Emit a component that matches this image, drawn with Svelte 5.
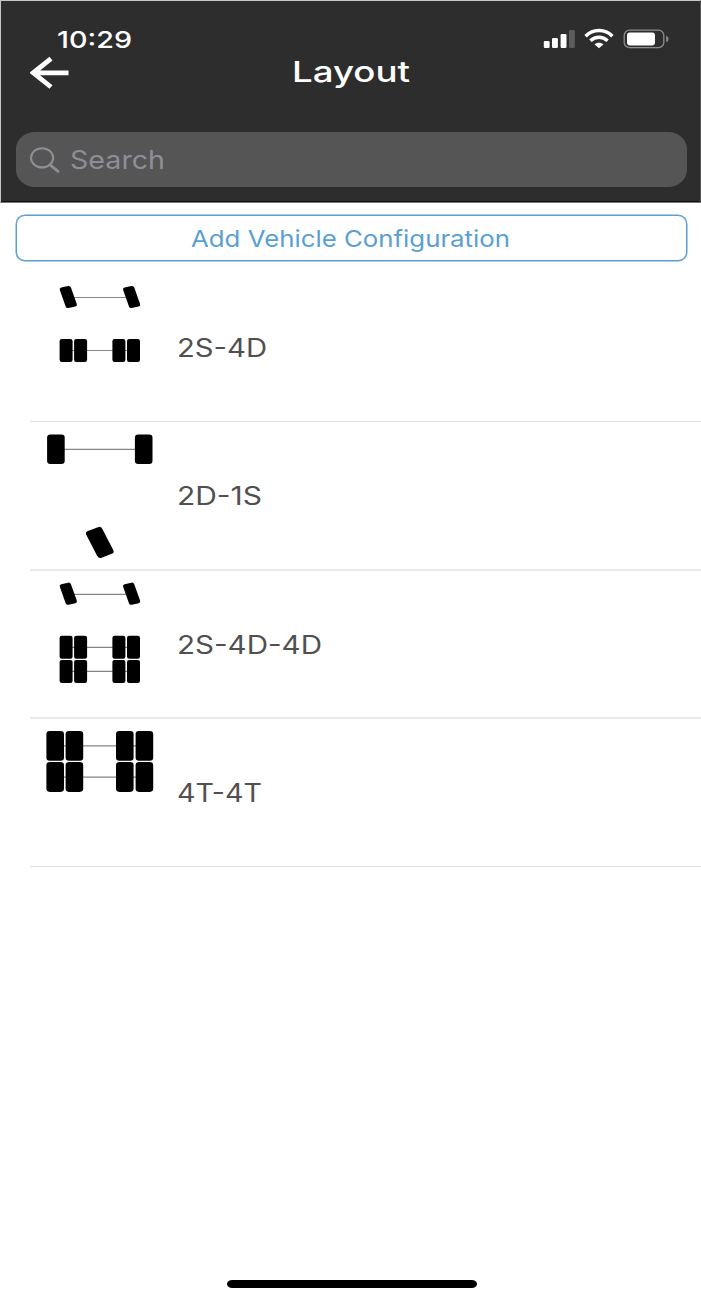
<script>
  const smallSteer = 'matrix(.975 -.22 .335 .94 ';
  const largeSteer = 'matrix(.93 -.35 .46 .89 ';

  // Wheels are [centre x, centre y]; axles are [x1, x2, y]. Units are row pixels.
  const rows = [
    {
      name: '2S-4D', length: 90, height: 149,
      steer: [[68.3, 24], [131.6, 24]], duals: [[66.1, 77.5], [80.6, 77.5], [118.9, 77.5], [133.5, 77.5]],
      w: 13, h: 23, axles: [[72, 128, 24.5], [66, 134, 77.5]]
    },
    {
      name: '2D-1S', length: 85, height: 149,
      big: [[99.8, 120.4]], duals: [[55.9, 27.3], [143.7, 27.3]],
      w: 17.6, h: 29.6, axles: [[56, 144, 27.3]]
    },
    {
      name: '2S-4D-4D', length: 145, height: 148,
      steer: [[68.3, 22.7], [131.6, 22.7]],
      duals: [[66.1, 76.2], [80.6, 76.2], [118.9, 76.2], [133.5, 76.2], [66.1, 100.4], [80.6, 100.4], [118.9, 100.4], [133.5, 100.4]],
      w: 13, h: 23, axles: [[72, 128, 23.3], [66, 134, 76.4], [66, 134, 100.4]]
    },
    {
      name: '4T-4T', length: 85, height: 148,
      duals: [[55.2, 26.8], [74.4, 26.8], [124.8, 26.8], [144.4, 26.8], [55.2, 58], [74.4, 58], [124.8, 58], [144.4, 58]],
      w: 17.6, h: 29.8, axles: [[56, 144, 26.9], [56, 144, 58.2]]
    }
  ];
</script>

{#snippet wide(text, length, size, weight)}
  <svg class="wide" width={length} height={size} aria-label={text}>
    <text x="0" y={size * 0.86} font-size={size} font-weight={weight} textLength={length} lengthAdjust="spacingAndGlyphs">{text}</text>
  </svg>
{/snippet}

<main class="screen">
  <header>
    <div class="status">
      <div class="time">{@render wide('10:29', 75, 23.5, 550)}</div>
      <svg class="indicators" width="128" height="22" viewBox="542 28 128 22">
        <g fill="#fff">
          <rect x="543.8" y="41" width="5.8" height="7" rx="1.3" />
          <rect x="552" y="38" width="5.9" height="10" rx="1.3" />
          <rect x="560.6" y="34" width="5.9" height="14" rx="1.3" />
        </g>
        <rect x="569" y="30" width="5.8" height="18" rx="1.3" fill="#5d5d5d" />
        <g fill="none" stroke="#fff" stroke-width="3.5">
          <path d="M585.6 36.2C593 28.7 605 28.7 612.4 36.2" />
          <path d="M590.4 40.8C595.5 36.2 602.5 36.2 607.6 40.8" />
        </g>
        <path d="M594.4 44.3C597 42.2 601 42.2 603.6 44.3L599 48.2Z" fill="#fff" />
        <rect x="624.2" y="30.2" width="39.6" height="17.4" rx="5.2" fill="none" stroke="#8d8d8d" stroke-width="1.3" />
        <rect x="627" y="32.6" width="28" height="12.8" rx="2.8" fill="#fff" />
        <path d="M666.2 35.5Q668.6 36.6 668.6 38.9T666.2 42.3Z" fill="#8d8d8d" />
      </svg>
    </div>
    <div class="nav">
      <svg class="back" width="40" height="34" viewBox="30 56 40 34">
        <path d="M51 58.6L33.3 72.8L51 87M33 72.8H68.5" fill="none" stroke="#fff" stroke-width="4.8" />
      </svg>
      <h1>{@render wide('Layout', 118, 28.8, 500)}</h1>
    </div>
    <div class="search">
      <svg width="32" height="28" viewBox="28.7 145.7 32 28" fill="none" stroke="#8f8e95">
        <ellipse cx="41.8" cy="157.5" rx="11.1" ry="9.6" stroke-width="2.1" />
        <path d="M50 164.7L57.7 171" stroke-width="2.9" stroke-linecap="round" />
      </svg>
      {@render wide('Search', 95, 25.6, 400)}
    </div>
  </header>

  <button class="add">{@render wide('Add Vehicle Configuration', 319, 23.2, 400)}</button>

  <ul>
    {#each rows as row, i}
      <li class:soft={i === 1 || i === 2} style:height="{row.height}px">
        <svg class="diagram" width="147" height="146" viewBox="30 0 147 146">
          {#each row.axles as [x1, x2, y]}
            <line {x1} {x2} y1={y} y2={y} stroke="#858585" stroke-width="1.2" />
          {/each}
          {#each row.duals as [x, y]}
            <rect x={x - row.w / 2} y={y - row.h / 2} width={row.w} height={row.h} rx={row.w > 15 ? 3.3 : 2.2} />
          {/each}
          {#each row.steer ?? [] as [x, y]}
            <rect x="-5.7" y="-10.9" width="11.4" height="21.8" rx="2.2" transform="{smallSteer}{x} {y})" />
          {/each}
          {#each row.big ?? [] as [x, y]}
            <rect x="-8.6" y="-15" width="17.2" height="30" rx="3.2" transform="{largeSteer}{x} {y})" />
          {/each}
        </svg>
        <div class="name">{@render wide(row.name, row.length, 25.4, 400)}</div>
      </li>
    {/each}
  </ul>
  <div class="home"></div>
</main>

<style>
  :global(body) { margin: 0; background: #fff; }
  .screen {
    width: 701px; height: 1300px; box-sizing: border-box; overflow: hidden;
    display: flex; flex-direction: column; background: #fff;
    font-family: Inter, "Liberation Sans", sans-serif;
  }
  .wide { display: block; overflow: visible; fill: currentColor; flex: none; }
  header {
    height: 203px; box-sizing: border-box; flex: none;
    background: #2d2d2d; border: 1px solid #c4c8c7; border-right-color: #555;
    border-bottom: 1px solid #777; box-shadow: inset 0 -1px #111; color: #fff;
  }
  .status { display: flex; justify-content: space-between; padding: 27px 30px 0 56px; height: 22px; }
  .nav { display: grid; grid-template-columns: 40px 1fr 40px; padding: 6px 29px 0; height: 34px; }
  h1 { margin: 0; display: flex; justify-content: center; padding-top: 1px; }
  .search {
    display: flex; align-items: center; gap: 9.5px; height: 55px; box-sizing: border-box;
    margin: 42px 13px 0 14.5px; padding-left: 13px;
    background: #555; border-radius: 19px / 17px; color: #8f8e95;
  }
  .search .wide { margin-top: 1px; }
  .add {
    display: flex; align-items: center; justify-content: center; flex: none; box-sizing: border-box;
    width: 671px; height: 46px; margin: 12px 0 12px 15.5px; padding: 1px 1px 0 0;
    border: 1px solid #5a9fd4; box-shadow: 0 0 0 .5px #5a9fd4; border-radius: 9px; background: #fff; color: #5a9fd4; font-family: inherit;
  }
  ul { list-style: none; margin: 0; padding: 0 0 0 30px; }
  li { display: flex; align-items: center; box-sizing: border-box; border-bottom: 1px solid #dfdfdf; color: #505050; }
  li.soft { border-bottom: 2px solid #ebebeb; }
  .diagram { align-self: flex-start; flex: none; fill: #000; }
  .name { padding-top: 1px; }
  .home { width: 250px; height: 8px; border-radius: 5px / 4px; background: #000; margin: auto 0 12px 226.5px; }
</style>
